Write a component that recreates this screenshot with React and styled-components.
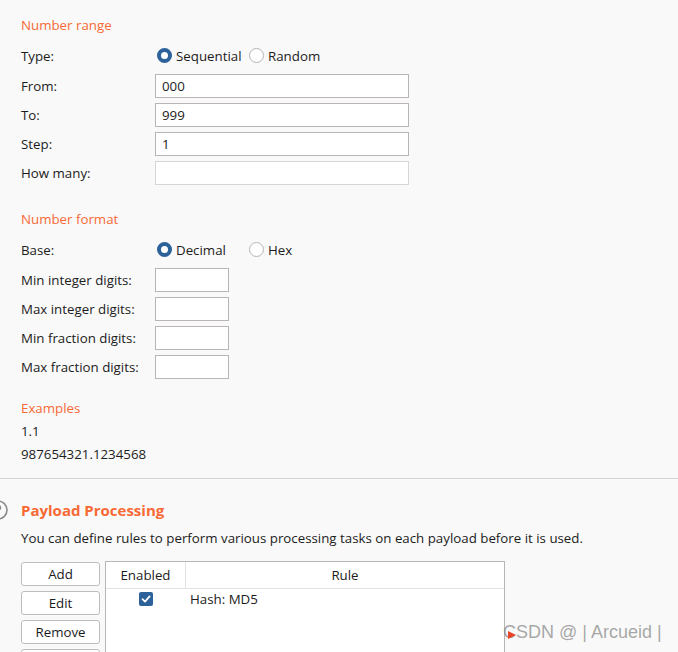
import styled, { createGlobalStyle } from "styled-components";

const GlobalStyle = createGlobalStyle`
  html, body {
    margin: 0;
    padding: 0;
    height: 652px;
    overflow: hidden;
    background: #f9f9f9;
  }
  body {
    font-family: "Open Sans", "Noto Sans", sans-serif;
    font-size: 13.3px;
    color: #1c1c1c;
  }
`;

const orange = "#f76935";

export default function App() {
  return (
    <>
      <GlobalStyle />
      <Page>
        <Section>
          <Heading>Number range</Heading>
          <RadioRow>
            <Label>Type:</Label>
            <Options>
              <Radio checked>Sequential</Radio>
              <Radio>Random</Radio>
            </Options>
          </RadioRow>
          <FieldRow>
            <Label>From:</Label>
            <Input value="000" />
          </FieldRow>
          <FieldRow>
            <Label>To:</Label>
            <Input value="999" />
          </FieldRow>
          <FieldRow>
            <Label>Step:</Label>
            <Input value="1" />
          </FieldRow>
          <FieldRow>
            <Label>How many:</Label>
            <Input faint value="" />
          </FieldRow>
        </Section>

        <Section $top={24}>
          <Heading>Number format</Heading>
          <RadioRow>
            <Label>Base:</Label>
            <Options>
              <Radio checked>Decimal</Radio>
              <Radio>Hex</Radio>
            </Options>
          </RadioRow>
          <FieldRow>
            <Label>Min integer digits:</Label>
            <Input small value="" />
          </FieldRow>
          <FieldRow>
            <Label>Max integer digits:</Label>
            <Input small value="" />
          </FieldRow>
          <FieldRow>
            <Label>Min fraction digits:</Label>
            <Input small value="" />
          </FieldRow>
          <FieldRow>
            <Label>Max fraction digits:</Label>
            <Input small value="" />
          </FieldRow>
        </Section>

        <Section $top={19}>
          <Heading>Examples</Heading>
          <Example>1.1</Example>
          <Example>987654321.1234568</Example>
        </Section>
      </Page>

      <Divider />

      <Page>
        <PanelTitle>
          <HelpIcon>
            <svg width="20" height="20" viewBox="0 0 20 20">
              <circle cx="10" cy="10" r="9" fill="none" stroke="#8a8a8a" strokeWidth="1.6" />
              <path d="M7.6 7.6a2.4 2.4 0 1 1 3.4 2.2c-.7.4-1 .8-1 1.6v.6" fill="none" stroke="#8a8a8a" strokeWidth="1.6" strokeLinecap="round" />
              <circle cx="10" cy="14.6" r="1" fill="#8a8a8a" />
            </svg>
          </HelpIcon>
          <PanelHeading>Payload Processing</PanelHeading>
        </PanelTitle>
        <Description>
          You can define rules to perform various processing tasks on each payload before it is used.
        </Description>

        <RulesArea>
          <Buttons>
            <Button>Add</Button>
            <Button>Edit</Button>
            <Button>Remove</Button>
            <Button aria-label="Up" />
          </Buttons>
          <Table>
            <HeaderRow>
              <EnabledCell $header>Enabled</EnabledCell>
              <RuleCell $header>Rule</RuleCell>
            </HeaderRow>
            <BodyRow>
              <EnabledCell>
                <Checkbox>
                  <svg width="10" height="10" viewBox="0 0 10 10">
                    <path d="M1.5 5.2 L4 7.6 L8.6 2.4" fill="none" stroke="#fff" strokeWidth="1.8" strokeLinecap="round" strokeLinejoin="round" />
                  </svg>
                </Checkbox>
              </EnabledCell>
              <RuleCell>Hash: MD5</RuleCell>
            </BodyRow>
          </Table>
        </RulesArea>
      </Page>

      <Watermark>
        <Marker />
        CSDN @ | Arcueid |
      </Watermark>
    </>
  );
}

function Radio({ checked, children }) {
  return (
    <RadioOption>
      <RadioDot $checked={checked} />
      <span>{children}</span>
    </RadioOption>
  );
}

const Page = styled.div`
  padding-left: 21px;
`;

const Section = styled.section`
  display: flex;
  flex-direction: column;
  gap: 5px;
  margin-top: ${(p) => p.$top || 0}px;
  padding-top: ${(p) => (p.$top ? 0 : 15)}px;
`;

const Heading = styled.div`
  color: ${orange};
  line-height: 20px;
  margin-bottom: 2px;
`;

const RadioRow = styled.div`
  display: grid;
  grid-template-columns: 134px 1fr;
  align-items: center;
  height: 27px;
`;

const FieldRow = styled.div`
  display: grid;
  grid-template-columns: 134px auto;
  justify-content: start;
  align-items: center;
  height: 24px;
`;

const Label = styled.div`
  line-height: 20px;
`;

const Options = styled.div`
  display: grid;
  grid-template-columns: 92px 92px;
  padding-left: 2px;
`;

const RadioOption = styled.label`
  display: flex;
  align-items: center;
  gap: 4px;
`;

const RadioDot = styled.span`
  box-sizing: border-box;
  width: 15px;
  height: 15px;
  border-radius: 50%;
  background: #fff;
  border: ${(p) => (p.$checked ? "4.5px solid #2c6299" : "1px solid #b4b4b4")};
`;

const Input = styled.input.attrs({ readOnly: true })`
  box-sizing: border-box;
  width: ${(p) => (p.small ? 74 : 254)}px;
  height: 24px;
  border: 1px solid ${(p) => (p.faint ? "#d6d6d6" : "#b9b5b5")};
  background: #fff;
  padding: 0 6px;
  font: inherit;
  color: #1c1c1c;
  outline: none;
`;

const Example = styled.div`
  line-height: 23px;
  margin-top: -5px;
`;

const Divider = styled.hr`
  border: 0;
  border-top: 1px solid #d4d4d4;
  margin: 12px 0 0;
`;

const PanelTitle = styled.div`
  display: flex;
  align-items: center;
  gap: 13px;
  margin-top: 20px;
  height: 22px;
`;

const HelpIcon = styled.span`
  display: flex;
  margin-left: -33px;
`;

const PanelHeading = styled.h2`
  margin: 0;
  color: ${orange};
  font-size: 15px;
  font-weight: 700;
`;

const Description = styled.p`
  margin: 7px 0 0;
  line-height: 20px;
`;

const RulesArea = styled.div`
  display: flex;
  gap: 5px;
  margin-top: 13px;
`;

const Buttons = styled.div`
  display: flex;
  flex-direction: column;
  gap: 5px;
  padding-top: 1px;
`;

const Button = styled.button`
  box-sizing: border-box;
  width: 79px;
  height: 24px;
  border: 1px solid #bdbdbd;
  border-radius: 3px;
  background: #fff;
  font: inherit;
  color: #1c1c1c;
  padding: 0;
`;

const Table = styled.div`
  box-sizing: border-box;
  width: 400px;
  height: 140px;
  border: 1px solid #b6b6b6;
  background: #fff;
`;

const HeaderRow = styled.div`
  display: flex;
  height: 26px;
  border-bottom: 1px solid #e2e2e2;
`;

const BodyRow = styled.div`
  display: flex;
  height: 20px;
`;

const EnabledCell = styled.div`
  width: 80px;
  display: flex;
  align-items: center;
  justify-content: center;
  border-right: ${(p) => (p.$header ? "1px solid #e2e2e2" : "none")};
  box-sizing: border-box;
`;

const RuleCell = styled.div`
  flex: 1;
  display: flex;
  align-items: center;
  justify-content: ${(p) => (p.$header ? "center" : "flex-start")};
  padding-left: ${(p) => (p.$header ? 0 : 4)}px;
`;

const Checkbox = styled.span`
  width: 14px;
  height: 14px;
  border-radius: 2px;
  background: #2c6299;
  display: flex;
  align-items: center;
  justify-content: center;
`;

const Watermark = styled.div`
  position: absolute;
  left: 503px;
  top: 622px;
  font-family: "Liberation Sans", Arial, sans-serif;
  font-size: 18px;
  color: rgba(130, 130, 130, 0.7);
  display: flex;
  align-items: center;
  white-space: nowrap;
`;

const Marker = styled.span`
  position: absolute;
  left: 5px;
  top: 9px;
  width: 0;
  height: 0;
  border-top: 4px solid transparent;
  border-bottom: 4px solid transparent;
  border-left: 8px solid #e8452a;
`;
